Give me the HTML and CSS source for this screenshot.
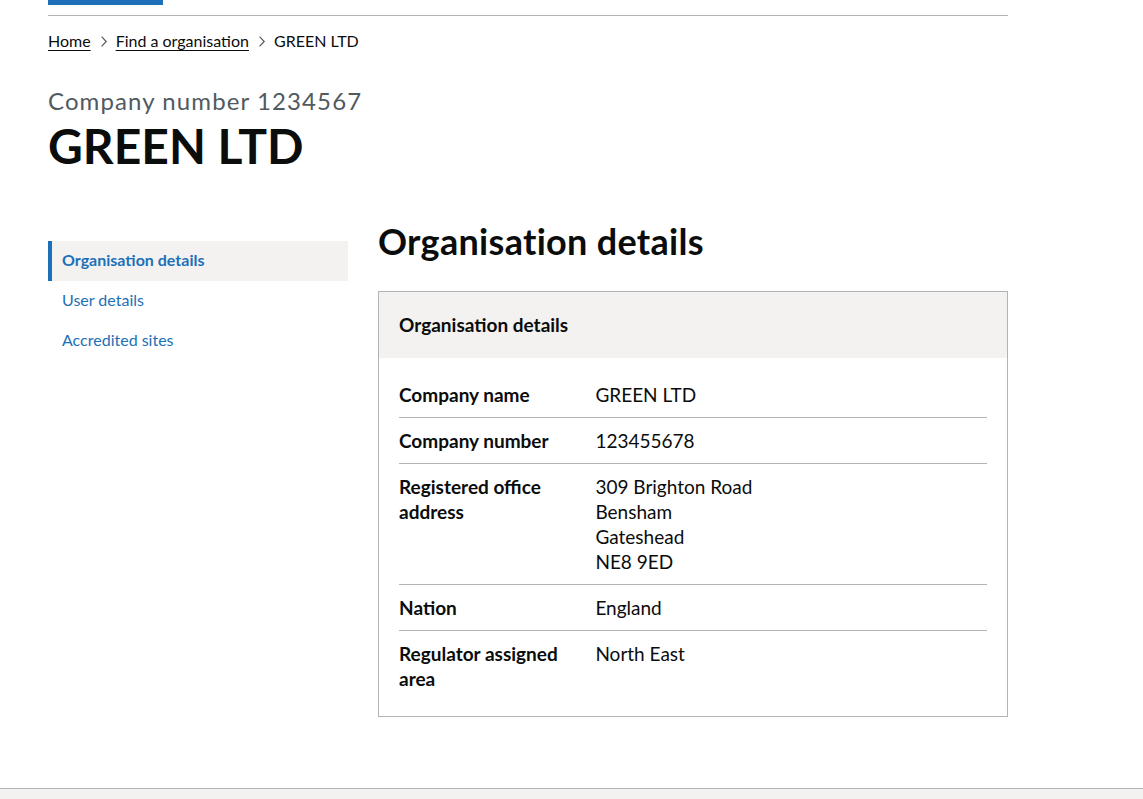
FILE: index.html
```html
<!DOCTYPE html>
<html lang="en">
<head>
<meta charset="utf-8">
<title>GREEN LTD - Organisation details</title>
<link rel="stylesheet" href="styles.css">
</head>
<body>
<div class="page">
  <div class="service-nav"><div class="service-nav__active"></div></div>
  <nav class="breadcrumbs" aria-label="Breadcrumb">
    <ol class="breadcrumbs__list">
      <li><a class="breadcrumbs__link" href="#">Home</a></li>
      <li class="breadcrumbs__sep" aria-hidden="true"><svg width="6" height="11" viewBox="0 0 6 11"><polyline points="0.6,0.7 5.2,5.5 0.6,10.3" fill="none" stroke="#505a5f" stroke-width="1.2"/></svg></li>
      <li><a class="breadcrumbs__link" href="#">Find a organisation</a></li>
      <li class="breadcrumbs__sep" aria-hidden="true"><svg width="6" height="11" viewBox="0 0 6 11"><polyline points="0.6,0.7 5.2,5.5 0.6,10.3" fill="none" stroke="#505a5f" stroke-width="1.2"/></svg></li>
      <li aria-current="page">GREEN LTD</li>
    </ol>
  </nav>
  <main class="main">
    <span class="caption">Company number 1234567</span>
    <h1 class="heading-xl">GREEN LTD</h1>
    <div class="grid">
      <aside class="side-nav">
        <ul class="side-nav__list">
          <li class="side-nav__item side-nav__item--active"><a href="#">Organisation details</a></li>
          <li class="side-nav__item"><a href="#">User details</a></li>
          <li class="side-nav__item"><a href="#">Accredited sites</a></li>
        </ul>
      </aside>
      <section class="content">
        <h2 class="heading-l">Organisation details</h2>
        <div class="card">
          <div class="card__header"><h3 class="card__title">Organisation details</h3></div>
          <div class="card__content">
            <dl class="summary">
              <div class="summary__row"><dt class="summary__key">Company name</dt><dd class="summary__value">GREEN LTD</dd></div>
              <div class="summary__row"><dt class="summary__key">Company number</dt><dd class="summary__value">123455678</dd></div>
              <div class="summary__row"><dt class="summary__key">Registered office address</dt><dd class="summary__value">309 Brighton Road<br>Bensham<br>Gateshead<br>NE8 9ED</dd></div>
              <div class="summary__row"><dt class="summary__key">Nation</dt><dd class="summary__value">England</dd></div>
              <div class="summary__row"><dt class="summary__key">Regulator assigned area</dt><dd class="summary__value">North East</dd></div>
            </dl>
          </div>
        </div>
      </section>
    </div>
  </main>
</div>
<footer class="footer"></footer>
</body>
</html>
```
FILE: styles.css
```css
* { box-sizing: border-box; }
html, body { margin: 0; padding: 0; }
body {
  font-family: Lato, "Liberation Sans", Arial, sans-serif;
  color: #0b0c0c;
  background: #fff;
}
.page {
  width: 1008px;
  padding-left: 48px;
}
.service-nav {
  height: 16px;
  border-bottom: 1px solid #b1b4b6;
}
.service-nav__active {
  width: 115px;
  height: 5px;
  background: #1d70b8;
}
.breadcrumbs {
  margin-top: 15px;
  font-size: 16px;
  line-height: 20px;
}
.breadcrumbs__list {
  display: flex;
  align-items: center;
  margin: 0;
  padding: 0;
  list-style: none;
}
.breadcrumbs__sep { display: flex; align-items: center; margin: 0 9px 0 10px; }
.breadcrumbs__link {
  color: #0b0c0c;
  text-decoration: underline;
  text-decoration-thickness: 1px;
  text-underline-offset: 3px;
}
.main { padding-top: 35px; }
.caption {
  display: block;
  font-size: 24px;
  line-height: 30px;
  letter-spacing: 1.1px;
  color: #505a5f;
  margin-bottom: 5px;
}
.heading-xl {
  font-size: 48px;
  line-height: 50px;
  font-weight: 700;
  margin: 0 0 50px;
}
.grid {
  display: grid;
  grid-template-columns: 300px 630px;
  column-gap: 30px;
}
.side-nav { padding-top: 20px; }
.side-nav__list { list-style: none; margin: 0; padding: 0; }
.side-nav__item {
  padding: 9px 10px 11px 14px;
  font-size: 16px;
  line-height: 20px;
}
.side-nav__item a { color: #1d70b8; text-decoration: none; }
.side-nav__item--active {
  background: #f3f2f1;
  border-left: 4px solid #1d70b8;
  padding-left: 10px;
}
.side-nav__item--active a { font-weight: 700; }
.heading-l {
  font-size: 36px;
  line-height: 40px;
  font-weight: 700;
  letter-spacing: 0.3px;
  margin: 0 0 30px;
}
.card {
  border: 1px solid #b1b4b6;
  margin-bottom: 71px;
}
.card__header {
  background: #f3f2f1;
  padding: 20px 20px 21px;
}
.card__title {
  margin: 0;
  font-size: 19px;
  line-height: 25px;
  font-weight: 700;
}
.card__content { padding: 14px 20px 15px; }
.summary { margin: 0; font-size: 19px; line-height: 25px; }
.summary__row {
  display: flex;
  border-bottom: 1px solid #b1b4b6;
}
.summary__row:last-child { border-bottom: 0; }
.summary__key {
  width: calc(30% + 20px);
  padding: 10px 20px 10px 0;
  font-weight: 700;
  margin: 0;
}
.summary__value {
  flex: 1;
  padding: 10px 0;
  margin: 0;
}
.footer {
  height: 120px;
  border-top: 1px solid #b1b4b6;
  background: #f3f2f1;
}
```
